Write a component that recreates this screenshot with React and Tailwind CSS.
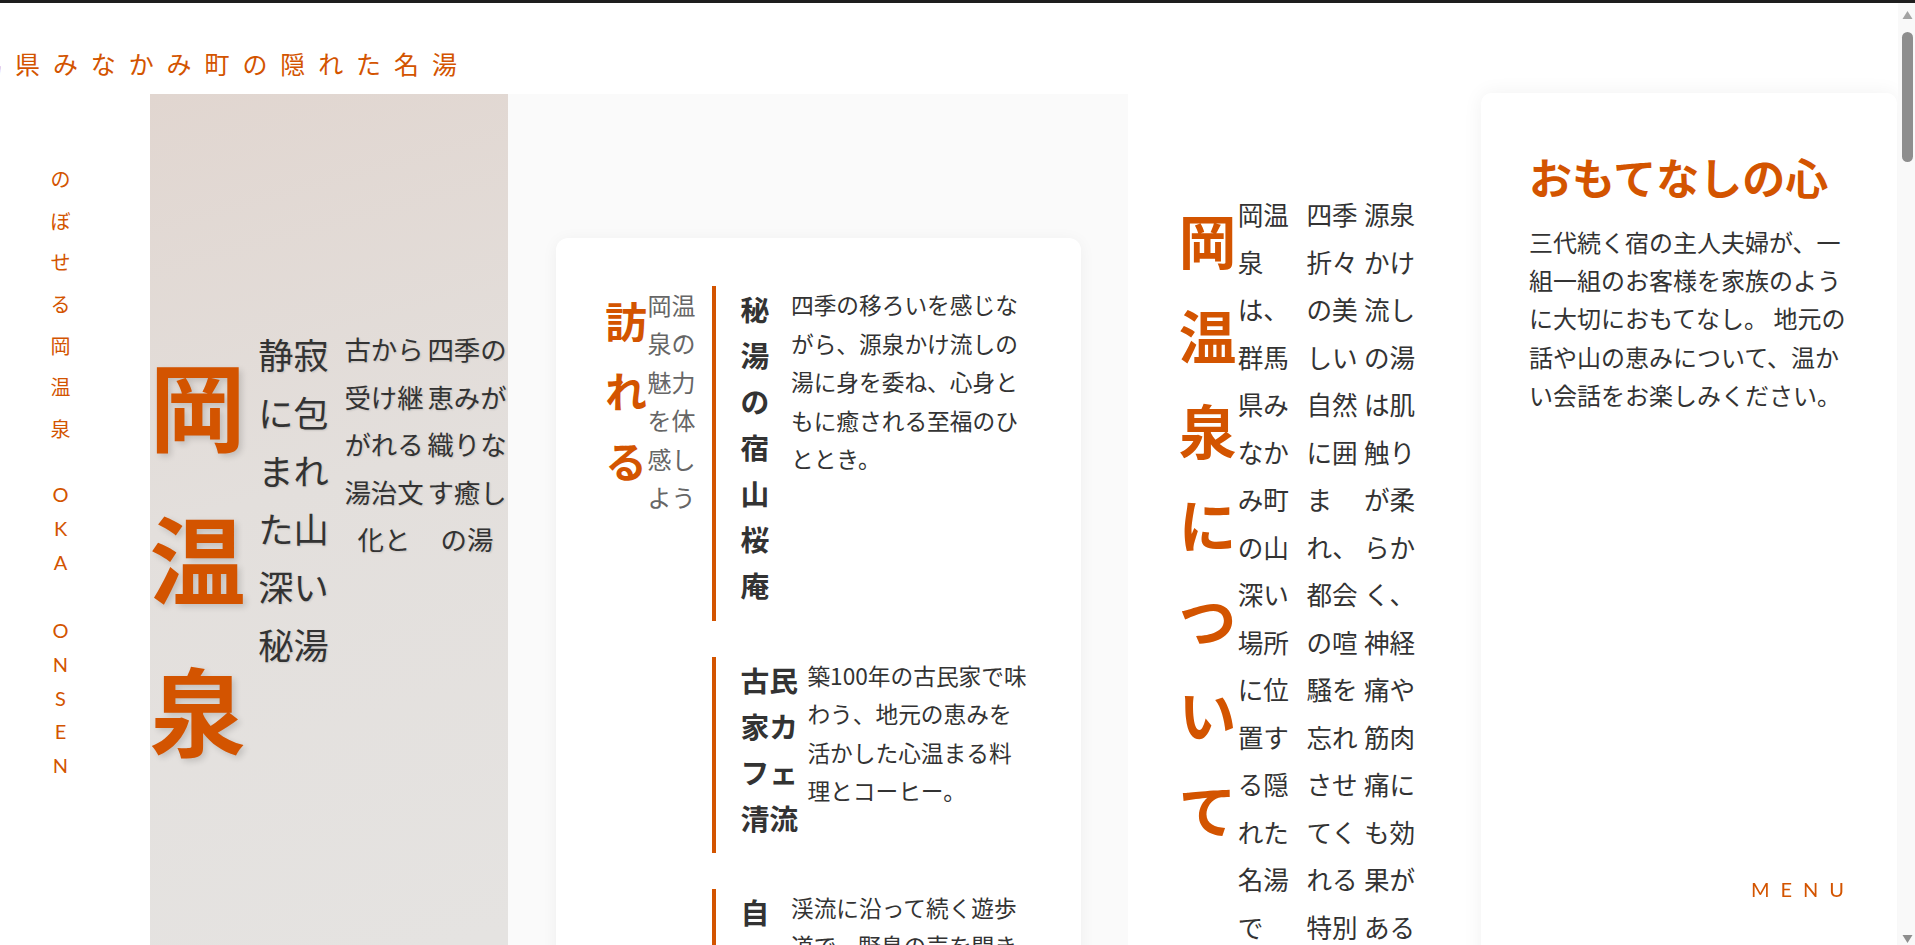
import React from 'react';

const SPOTS = [
  {
    name: '秘湯の宿山桜庵',
    titleW: 'w-[29px]',
    gap: 'ml-[21.6px]',
    text: '四季の移ろいを感じながら、源泉かけ流しの湯に身を委ね、心身ともに癒される至福のひととき。',
  },
  {
    name: '古民家カフェ清流',
    titleW: 'w-[58px]',
    gap: 'ml-[9px]',
    text: '築100年の古民家で味わう、地元の恵みを活かした心温まる料理とコーヒー。',
  },
  {
    name: '自然散策路',
    titleW: 'w-[29px]',
    gap: 'ml-[21.6px]',
    text: '渓流に沿って続く遊歩道で、野鳥の声を聞きながら森林浴をお楽しみいただけます。',
  },
];

function SideLabel() {
  return (
    <div className="flex w-[121px] flex-col items-center text-[20px] text-[#d35400]">
      {'のぼせる岡温泉'.split('').map((c, i) => (
        <span key={`j${i}`} className="block h-[41.65px] leading-[41.65px]">
          {c}
        </span>
      ))}
      <span className="block h-[28.9px]" />
      {'OKA'.split('').map((c, i) => (
        <span key={`a${i}`} className="block h-[33.7px] font-['Lato',sans-serif] leading-[33.7px]">
          {c}
        </span>
      ))}
      <span className="block h-[34.6px]" />
      {'ONSEN'.split('').map((c, i) => (
        <span key={`b${i}`} className="block h-[33.7px] font-['Lato',sans-serif] leading-[33.7px]">
          {c}
        </span>
      ))}
    </div>
  );
}

function Spot({ spot }) {
  return (
    <div className="mb-9 flex border-l-4 border-[#d35400] pb-3 pl-[24.4px]">
      <h3 className={`${spot.titleW} shrink-0 text-[28.8px] font-bold leading-[46.08px] text-[#333]`}>{spot.name}</h3>
      <p className={`${spot.gap} min-w-0 flex-1 text-[22.7px] leading-[38.5px] text-[#333]`}>{spot.text}</p>
    </div>
  );
}

// window scrollbar look-alike on the right edge
function ScrollRail() {
  return (
    <div className="fixed bottom-0 right-0 top-[3px] w-[17px] bg-[#f9f9f9]">
      <svg className="absolute left-[4px] top-[7px]" width="11" height="10" viewBox="0 0 11 10">
        <path d="M5.5 1 L10.5 9 L0.5 9 Z" fill="#a3a3a3" />
      </svg>
      <div className="absolute left-[4px] top-[29px] h-[130px] w-[11px] rounded-full bg-[#8e8e8e]" />
      <svg className="absolute bottom-[1px] left-[4px]" width="11" height="10" viewBox="0 0 11 10">
        <path d="M0.5 1 L10.5 1 L5.5 9 Z" fill="#8e8e8e" />
      </svg>
    </div>
  );
}

export default function App() {
  return (
    <div className="overflow-x-hidden bg-white font-['Noto_Sans_CJK_JP','Noto_Sans',sans-serif] text-[#333]">
      <div className="h-[3px] bg-[#1e1e1e]" />

      <header className="h-[91px] overflow-hidden pt-[40.3px]">
        <p className="-ml-[60.8px] whitespace-nowrap text-[25px] leading-[40px] tracking-[12.9px] text-[#d35400]">
          群馬県みなかみ町の隠れた名湯
        </p>
      </header>

      <div className="flex min-h-[6460px] pr-[17px]">
        <aside className="w-[150px] shrink-0 pt-[64.1px]">
          <SideLabel />
        </aside>

        {/* hero */}
        <section className="w-[358px] shrink-0 bg-[linear-gradient(165deg,#e1d6d0_0px,#e3dfdc_420px,#e5e3e1_900px)] pt-[231px]">
          <div className="flex items-start">
            <h1 className="-ml-px mt-[2px] w-[97px] text-center text-[96px] font-bold leading-[152.5px] text-[#d35400] [text-shadow:3px_3px_6px_rgba(0,0,0,0.15)]">
              岡温泉
            </h1>
            <p className="ml-[12px] w-[71px] text-center text-[35.2px] leading-[58px] [text-shadow:1px_1px_2px_rgba(0,0,0,0.12)]">
              静寂に包まれた山深い秘湯
            </p>
            <p className="ml-[15px] w-[80px] text-center text-[26.4px] leading-[47.5px] [text-shadow:1px_1px_2px_rgba(0,0,0,0.12)]">
              古から受け継がれる湯治文化と
            </p>
            <p className="ml-[3px] w-[80px] text-center text-[26.4px] leading-[47.5px] [text-shadow:1px_1px_2px_rgba(0,0,0,0.12)]">
              四季の恵みが織りなす癒しの湯
            </p>
          </div>
        </section>

        {/* visit */}
        <section className="w-[620px] shrink-0 bg-[#fafafa] pl-12 pr-[47px] pt-[144px]">
          <div className="min-h-[1400px] rounded-xl bg-white pb-12 pl-[49px] pr-12 pt-12 shadow-[0_2px_16px_rgba(0,0,0,0.05)]">
            <div className="flex items-start">
              <h2 className="w-[42px] shrink-0 text-center text-[41.6px] font-bold leading-[69.75px] text-[#d35400]">
                訪れる
              </h2>
              <p className="ml-[0.5px] w-[48.5px] shrink-0 text-[24px] leading-[38.4px] text-[#666]">
                岡温泉の魅力を体感しよう
              </p>
              <div className="ml-[16px] min-w-0 flex-1">
                {SPOTS.map((s) => (
                  <Spot key={s.name} spot={s} />
                ))}
              </div>
            </div>
          </div>
        </section>

        {/* about */}
        <section className="flex w-[352px] shrink-0 items-start bg-white pl-[50.7px] pt-[96px]">
          <h2 className="mt-[2px] w-[58px] shrink-0 text-[57.6px] font-bold leading-[94.8px] text-[#d35400]">
            岡温泉について
          </h2>
          <p className="ml-px w-[52px] shrink-0 text-[25.6px] leading-[47.5px]">
            岡温泉は、群馬県みなかみ町の山深い場所に位置する隠れた名湯です。
          </p>
          <p className="ml-[16.7px] w-[52px] shrink-0 text-[25.6px] leading-[47.5px]">
            四季折々の美しい自然に囲まれ、都会の喧騒を忘れさせてくれる特別な時間をお過ごしください。
          </p>
          <p className="ml-[5.5px] w-[52px] shrink-0 text-[25.6px] leading-[47.5px]">
            源泉かけ流しの湯は肌触りが柔らかく、神経痛や筋肉痛にも効果があると言われています。
          </p>
        </section>

        {/* hospitality */}
        <div className="-mt-px mx-px min-w-0 flex-1 rounded-[10px] bg-white px-12 pt-12 shadow-[0_0_20px_rgba(0,0,0,0.06)]">
          <h2 className="mb-[10.6px] whitespace-nowrap text-[43px] font-bold leading-[71px] text-[#d35400]">
            おもてなしの心
          </h2>
          <p className="w-[320px] text-[24px] leading-[38.4px]">
            三代続く宿の主人夫婦が、一組一組のお客様を家族のように大切におもてなし。 地元の話や山の恵みについて、温かい会話をお楽しみください。
          </p>
        </div>
      </div>

      <button className="fixed bottom-[45.7px] right-[60px] font-['Lato',sans-serif] text-[20px] leading-[20px] tracking-[11px] text-[#d35400]">
        MENU
      </button>

      <ScrollRail />
    </div>
  );
}
